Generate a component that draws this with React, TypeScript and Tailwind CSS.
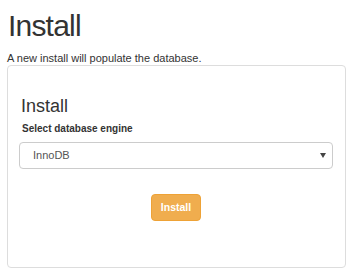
import React from "react";

export default function App() {
  return (
    <div className="w-[362px] h-[280px] bg-white text-[#333] px-[7px] pt-[5px]" style={{ fontFamily: '"Liberation Sans", Arial, sans-serif' }}>
      <h1 className="text-[30px] leading-[41px] tracking-[-0.8px] pl-[1px]">Install</h1>
      <p className="text-[11px] leading-[14px] mt-[5px]">A new install will populate the database.</p>
      <div className="w-[339px] h-[203px] border border-[#ddd] rounded-[4px] pl-[11px] pr-[12px]">
        <h3 className="text-[18px] leading-[22px] mt-[29px] pl-[2px]">Install</h3>
        <label className="block text-[10px] font-bold leading-[13px] mt-[5px] pl-[3px]">Select database engine</label>
        <div className="mt-[7px] h-[27px] border border-[#ccc] rounded-[4px] flex items-center justify-between pl-[13px] pr-[6px] text-[11px] text-[#555]">
          <span>InnoDB</span>
          <svg width="6" height="5" viewBox="0 0 6 5"><path d="M0 0h6L3 5z" fill="#444" /></svg>
        </div>
        <div className="flex justify-center mt-[25px]">
          <button className="w-[50px] h-[27px] bg-[#f0ad4e] border border-[#eea236] rounded-[4px] text-white text-[10.5px] font-bold">Install</button>
        </div>
      </div>
    </div>
  );
}
